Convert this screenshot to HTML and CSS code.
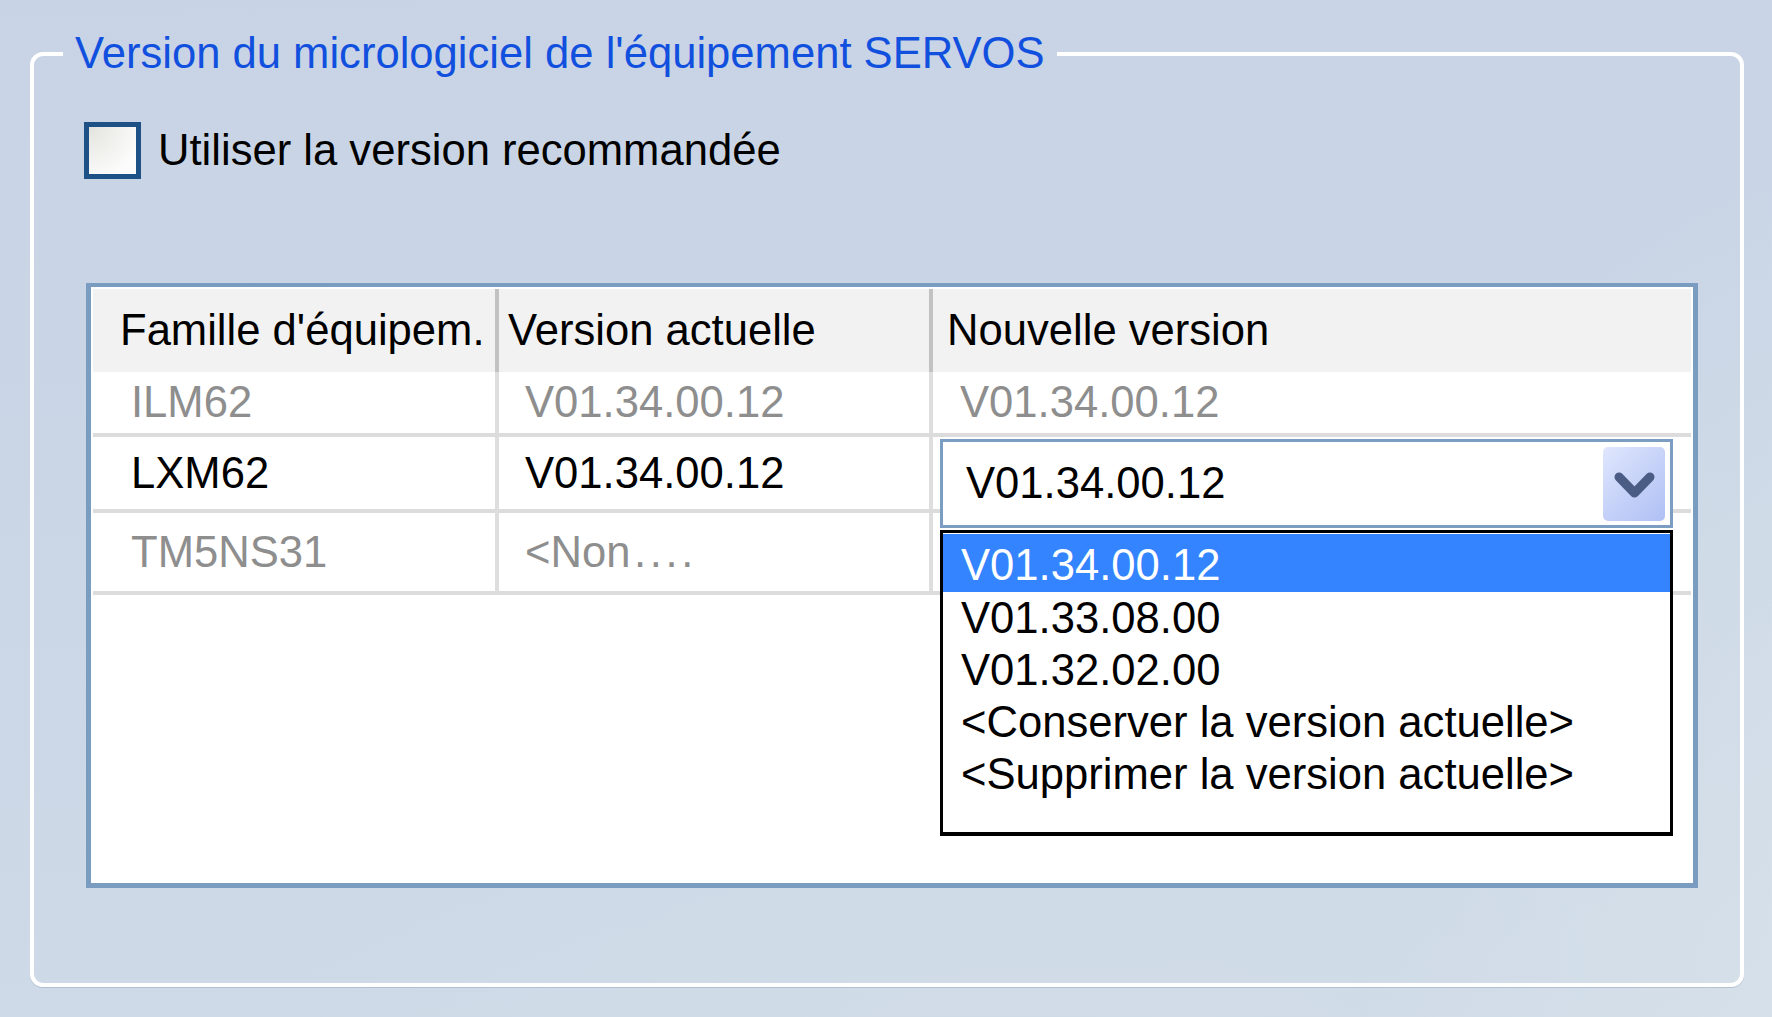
FILE: index.html
```html
<!DOCTYPE html>
<html lang='fr'>
	<head>
		<meta charset='utf-8' />
		<title>Version du micrologiciel</title>
		<link rel="stylesheet" href="styles.css">
	</head>
	<body>
		<fieldset class="fwGroup">
			<legend>Version du micrologiciel de l'équipement SERVOS</legend>
			<label class="option">
				<span class="checkBox"></span>
				<span>Utiliser la version recommandée</span>
			</label>
			<div class="grid">
				<div class="row head">
					<div class="cell c1">Famille d'équipem.</div>
					<div class="cell c2">Version actuelle</div>
					<div class="cell c3">Nouvelle version</div>
				</div>
				<div class="row r1 muted">
					<div class="cell c1">ILM62</div>
					<div class="cell c2">V01.34.00.12</div>
					<div class="cell c3">V01.34.00.12</div>
				</div>
				<div class="row r2">
					<div class="cell c1">LXM62</div>
					<div class="cell c2">V01.34.00.12</div>
					<div class="cell c3 editing">
						<div class="combo">
							<span class="comboText">V01.34.00.12</span>
							<span class="comboButton">
								<svg width="41" height="27" viewBox="0 0 41 27"><polyline points="5,5 20.5,21 36,5" fill="none" stroke="#4b5c84" stroke-width="9" stroke-linecap="round" stroke-linejoin="round"/></svg>
							</span>
							<ul class="comboList">
								<li class="selected">V01.34.00.12</li>
								<li>V01.33.08.00</li>
								<li>V01.32.02.00</li>
								<li>&lt;Conserver la version actuelle&gt;</li>
								<li>&lt;Supprimer la version actuelle&gt;</li>
							</ul>
						</div>
					</div>
				</div>
				<div class="row r3 muted">
					<div class="cell c1">TM5NS31</div>
					<div class="cell c2">&lt;Non&#8202;.&#8202;.&#8202;.&#8202;.</div>
					<div class="cell c3"></div>
				</div>
			</div>
		</fieldset>
	</body>
</html>
```

FILE: styles.css
```css
html, body {
	height: 100%;
}
body {
	margin: 0px;
	font-family: "Liberation Sans", Arial, sans-serif;
	font-size: 43.6px;
	color: #000;
	background-color: #cad6e6;
	background-image:
		radial-gradient(ellipse 700px 1300px at 1850px 1050px, rgba(216,226,234,0.85), rgba(216,226,234,0) 70%),
		radial-gradient(ellipse 1200px 900px at 1100px 1200px, rgba(212,222,233,0.7), rgba(212,222,233,0) 70%),
		linear-gradient(178deg, #c8d4e5 0%, #cad6e6 45%, #cedae7 100%);
	overflow: hidden;
}
.fwGroup {
	box-sizing: border-box;
	margin: 29px 28px 0px 30px;
	padding: 0px;
	height: 958px;
	border: 4px solid #fff;
	border-radius: 13px;
	box-shadow: 0px 1px 0px rgba(120,140,170,0.35);
}
.fwGroup legend {
	margin-left: 29px;
	padding: 0px 12px;
	color: #1150de;
	line-height: 49px;
}
.option {
	display: flex;
	flex-direction: row;
	align-items: center;
	margin: 44px 0px 0px 50px;
	height: 57px;
}
.checkBox {
	box-sizing: border-box;
	width: 57px;
	height: 57px;
	border: 5px solid #1e5186;
	background: radial-gradient(circle at 0% 0%, #e3e3de 0%, #f1f1ee 45%, #fcfcfc 80%);
	margin-right: 17px;
}
.grid {
	box-sizing: border-box;
	margin: 104px 42px 0px 52px;
	height: 605px;
	border: 5px solid #7b9cc1;
	border-top-width: 4px;
	padding: 2px;
	background: #fff;
}
.row {
	box-sizing: border-box;
	display: flex;
	flex-direction: row;
}
.cell {
	box-sizing: border-box;
	display: flex;
	align-items: center;
	white-space: nowrap;
}
.c1 {
	width: 406px;
	border-right: 4px solid #dedede;
	padding-left: 38px;
}
.c2 {
	width: 434px;
	border-right: 4px solid #dedede;
	padding-left: 26px;
}
.c3 {
	flex: 1;
	padding-left: 27px;
}
.head {
	height: 83px;
	background: #f2f2f2;
}
.head .c1 {
	padding-left: 27px;
	border-right-color: #c2c2c2;
}
.head .c2 {
	padding-left: 9px;
	border-right-color: #c2c2c2;
}
.head .c3 {
	padding-left: 14px;
	margin-right: 2px;
}
.r1, .r2, .r3 {
	border-bottom: 4px solid #dcdcdc;
}
.r1 {
	height: 65px;
}
.r2 {
	height: 76px;
}
.r3 {
	height: 82px;
}
.muted {
	color: #8e8e8e;
}
.editing {
	position: relative;
}
.combo {
	position: absolute;
	left: 7px;
	top: 2px;
	box-sizing: border-box;
	width: 733px;
	height: 89px;
	border: 3px solid #7c9dc2;
	background: #fff;
	display: flex;
	flex-direction: row;
	align-items: center;
	justify-content: space-between;
	padding: 0px 5px 0px 23px;
	z-index: 2;
}
.comboButton {
	width: 62px;
	height: 74px;
	border-radius: 5px;
	background: linear-gradient(135deg, #e0e7fd 0%, #c6d2f8 50%, #afc0f4 100%);
	display: flex;
	align-items: center;
	justify-content: center;
}
.comboButton svg {
	margin-top: 3px;
}
.comboList {
	position: absolute;
	left: -3px;
	top: calc(100% + 5px);
	box-sizing: border-box;
	width: 733px;
	height: 306px;
	margin: 0px;
	padding: 1px 0px 0px 0px;
	list-style: none;
	background: #fff;
	border: 3px solid #000;
	border-bottom-width: 4px;
	color: #000;
}
.comboList li {
	line-height: 52px;
	padding-left: 18px;
}
.comboList li.selected {
	background: #3384fe;
	color: #fff;
	padding-top: 5px;
	padding-bottom: 1px;
}
```
